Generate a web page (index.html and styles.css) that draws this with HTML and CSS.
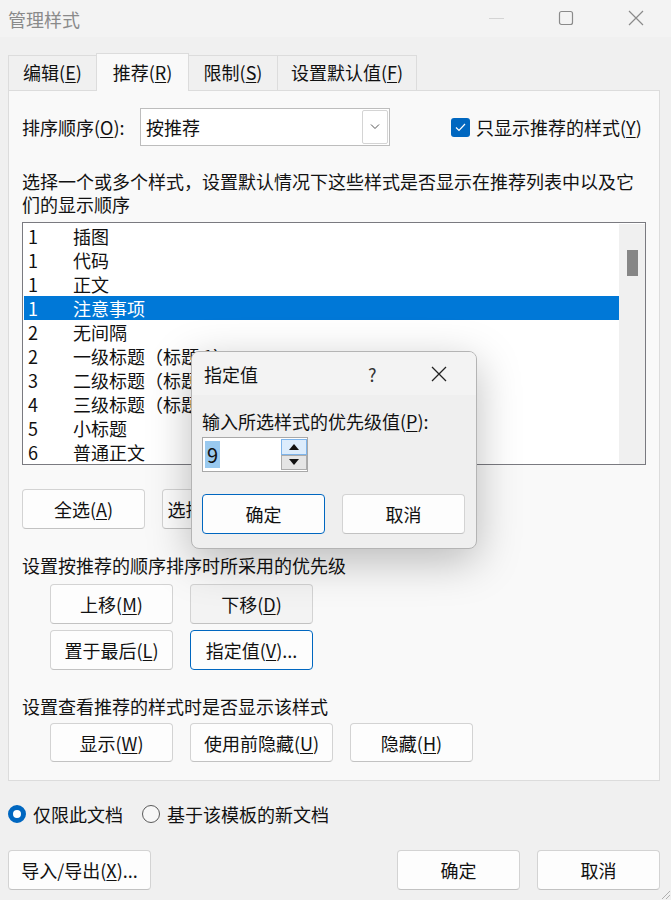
FILE: index.html
```html
<!DOCTYPE html>
<html lang="zh-CN">
<head>
    <meta charset="UTF-8">
    <title>管理样式</title>
    <link rel="stylesheet" href="styles.css">
</head>
<body>
    <div class="window">
        <!-- 标题栏 -->
        <header class="titlebar">
            <span class="title">管理样式</span>
            <div class="controls">
                <span class="ctrl"><svg width="16" height="16" viewBox="0 0 16 16"><path d="M1 8.5h15" stroke="#d4d4d4" stroke-width="1"/></svg></span>
                <span class="ctrl"><svg width="16" height="16" viewBox="0 0 16 16"><rect x="1.5" y="1.5" width="13" height="13" rx="2" fill="none" stroke="#8a8a8a" stroke-width="1.2"/></svg></span>
                <span class="ctrl"><svg width="16" height="16" viewBox="0 0 16 16"><path d="M1 1l14 14M15 1L1 15" stroke="#8a8a8a" stroke-width="1.2"/></svg></span>
            </div>
        </header>

        <main class="content">
            <div class="tabs">
                <div class="tab tab-edit">编辑(<u>E</u>)</div>
                <div class="tab tab-active">推荐(<u>R</u>)</div>
                <div class="tab tab-limit">限制(<u>S</u>)</div>
                <div class="tab tab-default">设置默认值(<u>F</u>)</div>
            </div>

            <section class="panel">
                <div class="sort-row">
                    <span class="sort-label">排序顺序(<u>O</u>):</span>
                    <div class="select">
                        <span class="select-text">按推荐</span>
                        <span class="select-btn"><svg width="10" height="6" viewBox="0 0 10 6"><path d="M1 0.5l4 4 4-4" fill="none" stroke="#555" stroke-width="1"/></svg></span>
                    </div>
                    <label class="check">
                        <span class="checkbox"><svg width="11" height="9" viewBox="0 0 11 9"><path d="M1 4.5l3 3 6-6.5" fill="none" stroke="#fff" stroke-width="1.2"/></svg></span>
                        只显示推荐的样式(<u>Y</u>)
                    </label>
                </div>

                <p class="desc">选择一个或多个样式，设置默认情况下这些样式是否显示在推荐列表中以及它们的显示顺序</p>

                <div class="listbox">
                    <ul class="style-list">
                        <li><span class="num">1</span>插图</li>
                        <li><span class="num">1</span>代码</li>
                        <li><span class="num">1</span>正文</li>
                        <li class="selected"><span class="num">1</span>注意事项</li>
                        <li><span class="num">2</span>无间隔</li>
                        <li><span class="num">2</span>一级标题（标题 1）</li>
                        <li><span class="num">3</span>二级标题（标题 2）</li>
                        <li><span class="num">4</span>三级标题（标题 3）</li>
                        <li><span class="num">5</span>小标题</li>
                        <li><span class="num">6</span>普通正文</li>
                    </ul>
                    <div class="scrollbar"><div class="thumb"></div></div>
                </div>

                <div class="btn-row">
                    <button class="btn">全选(<u>A</u>)</button>
                    <button class="btn btn-wide">选择内置样式(<u>B</u>)</button>
                </div>

                <p class="section-label">设置按推荐的顺序排序时所采用的优先级</p>
                <div class="btn-grid">
                    <button class="btn">上移(<u>M</u>)</button>
                    <button class="btn btn-dim">下移(<u>D</u>)</button>
                    <button class="btn">置于最后(<u>L</u>)</button>
                    <button class="btn btn-focus">指定值(<u>V</u>)...</button>
                </div>

                <p class="section-label">设置查看推荐的样式时是否显示该样式</p>
                <div class="btn-row btn-row-indent">
                    <button class="btn">显示(<u>W</u>)</button>
                    <button class="btn btn-wide">使用前隐藏(<u>U</u>)</button>
                    <button class="btn">隐藏(<u>H</u>)</button>
                </div>
            </section>

            <div class="radios">
                <label class="radio-item"><span class="radio radio-on"></span>仅限此文档</label>
                <label class="radio-item"><span class="radio"></span>基于该模板的新文档</label>
            </div>

            <div class="footer">
                <button class="btn btn-wide">导入/导出(<u>X</u>)...</button>
                <button class="btn btn-ok">确定</button>
                <button class="btn">取消</button>
            </div>
        </main>

        <svg class="grip" width="12" height="12" viewBox="0 0 12 12"><path d="M11 3L3 11M11 7L7 11" stroke="#b0b0b0" stroke-width="1"/></svg>

        <!-- 指定值 对话框 -->
        <div class="dialog">
            <div class="dialog-title">
                <span>指定值</span>
                <span class="dialog-help">?</span>
                <span class="dialog-close"><svg width="16" height="16" viewBox="0 0 16 16"><path d="M1 1l14 14M15 1L1 15" stroke="#222" stroke-width="1.3"/></svg></span>
            </div>
            <div class="dialog-body">
                <p class="dialog-label">输入所选样式的优先级值(<u>P</u>):</p>
                <div class="spin">
                    <span class="spin-value">9</span>
                    <div class="spin-btns">
                        <span class="spin-up"><svg width="10" height="6" viewBox="0 0 10 6"><path d="M5 0L10 6H0z" fill="#111"/></svg></span>
                        <span class="spin-down"><svg width="10" height="6" viewBox="0 0 10 6"><path d="M0 0h10L5 6z" fill="#111"/></svg></span>
                    </div>
                </div>
                <div class="dialog-buttons">
                    <button class="btn btn-focus">确定</button>
                    <button class="btn">取消</button>
                </div>
            </div>
        </div>
    </div>
</body>
</html>
```

FILE: styles.css
```css
/* 窗口 */
body {
    margin: 0;
    font-family: "Noto Sans CJK SC", sans-serif;
    font-size: 18px;
    color: #111;
    background: #f0f0f0;
}

.window {
    position: relative;
    width: 671px;
    height: 900px;
    overflow: hidden;
    background: #f0f0f0;
}

u {
    text-decoration-thickness: 1px;
    text-underline-offset: 2px;
}

p {
    margin: 0;
}

/* 标题栏 */
.titlebar {
    display: flex;
    align-items: center;
    height: 37px;
    background: #f3f3f3;
}

.title {
    padding-left: 8px;
    color: #8a8a8a;
    line-height: 24px;
}

.controls {
    display: flex;
    margin-left: auto;
    height: 37px;
}

.ctrl {
    display: flex;
    align-items: center;
    justify-content: center;
    width: 70px;
    padding-bottom: 1px;
}

.content {
    padding: 16px 11px 0 8px;
}

/* 选项卡 */
.tabs {
    display: flex;
    align-items: flex-end;
    height: 37px;
}

.tab {
    box-sizing: border-box;
    height: 35px;
    line-height: 33px;
    text-align: center;
    border: 1px solid #dcdcdc;
    border-bottom: none;
    margin-right: -1px;
    background: #f0f0f0;
}

.tab-edit { width: 89px; }
.tab-limit { width: 90px; }
.tab-default { width: 140px; }

.tab-active {
    position: relative;
    z-index: 1;
    width: 93px;
    height: 38px;
    line-height: 36px;
    margin-bottom: -1px;
    background: #f9f9f9;
}

/* 面板 */
.panel {
    box-sizing: border-box;
    height: 691px;
    border: 1px solid #dcdcdc;
    background: #f9f9f9;
    padding: 17px 13px 0 13px;
}

.sort-row {
    display: flex;
    align-items: center;
    height: 38px;
}

.sort-label {
    width: 118px;
}

.select {
    box-sizing: border-box;
    display: flex;
    align-items: center;
    width: 250px;
    height: 38px;
    border: 1px solid #bdbdbd;
    background: #fff;
    padding: 1px;
}

.select-text {
    flex: 1;
    padding-left: 4px;
}

.select-btn {
    box-sizing: border-box;
    display: flex;
    align-items: center;
    justify-content: center;
    width: 26px;
    height: 34px;
    border: 1px solid #d4d4d4;
    border-radius: 2px;
}

.check {
    display: flex;
    align-items: center;
    margin-left: 61px;
}

.checkbox {
    display: flex;
    align-items: center;
    justify-content: center;
    width: 19px;
    height: 19px;
    margin-right: 6px;
    border-radius: 3px;
    background: #0067c0;
}

.desc {
    margin-top: 24px;
    line-height: 23px;
}

/* 列表 */
.listbox {
    box-sizing: border-box;
    display: flex;
    height: 243px;
    margin-top: 6px;
    border: 1px solid #7a7a80;
    background: #fff;
}

.style-list {
    flex: 1;
    list-style: none;
    margin: 0;
    padding: 1px 0 0 1px;
    overflow: hidden;
}

.style-list li {
    display: flex;
    height: 24px;
    line-height: 24px;
    padding-left: 4px;
    white-space: nowrap;
}

.style-list .num {
    width: 45px;
}

.style-list .selected {
    background: #0078d7;
    color: #fff;
}

.scrollbar {
    width: 26px;
    margin-top: 1px;
    background: #f0f0f0;
}

.thumb {
    width: 11px;
    height: 26px;
    margin: 26px 0 0 8px;
    background: #868686;
}

/* 按钮 */
.btn {
    box-sizing: border-box;
    width: 123px;
    height: 40px;
    padding: 0;
    font-family: inherit;
    font-size: 18px;
    color: #111;
    background: #fdfdfd;
    border: 1px solid #d3d3d3;
    border-bottom-color: #c2c2c2;
    border-radius: 4px;
    white-space: nowrap;
}

.btn-wide {
    width: 143px;
}

.btn-dim {
    background: #f3f3f3;
}

.btn-focus {
    border-color: #0067c0;
}

.btn-row {
    display: flex;
    gap: 17px;
    margin-top: 24px;
}

.section-label {
    margin-top: 24px;
    line-height: 24px;
}

.btn-grid {
    display: grid;
    grid-template-columns: 123px 123px;
    gap: 6px 17px;
    margin-top: 7px;
    padding-left: 28px;
}

.btn-row-indent {
    margin-top: 5px;
    padding-left: 28px;
}

.btn-row-indent .btn {
    height: 39px;
}

/* 单选按钮 */
.radios {
    display: flex;
    align-items: center;
    gap: 19px;
    margin-top: 24px;
    height: 18px;
}

.radio-item {
    display: flex;
    align-items: center;
    gap: 7px;
    line-height: 24px;
}

.radio {
    box-sizing: border-box;
    width: 18px;
    height: 18px;
    border-radius: 50%;
    border: 1px solid #5a5a5a;
    background: #f7f7f7;
}

.radio-on {
    border: 5px solid #0067c0;
    background: #fff;
}

.footer {
    display: flex;
    gap: 17px;
    margin-top: 27px;
}

.btn-ok {
    margin-left: auto;
}

.grip {
    position: absolute;
    right: 0;
    bottom: 0;
}

/* 对话框 */
.dialog {
    position: absolute;
    left: 191px;
    top: 351px;
    box-sizing: border-box;
    width: 286px;
    height: 198px;
    border: 1px solid #b4b4b4;
    border-radius: 8px;
    background: #efefef;
    box-shadow: 0 12px 44px rgba(0, 0, 0, 0.26);
    overflow: hidden;
}

.dialog-title {
    display: flex;
    align-items: center;
    height: 43px;
    padding-left: 12px;
    background: #f3f3f3;
    line-height: 24px;
}

.dialog-help {
    margin-left: 110px;
    color: #333;
}

.dialog-close {
    display: flex;
    margin-left: 54px;
}

.dialog-body {
    padding: 14px 10px 0 10px;
}

.dialog-label {
    line-height: 24px;
}

.spin {
    box-sizing: border-box;
    display: flex;
    width: 106px;
    height: 35px;
    margin-top: 4px;
    border: 1px solid #a8a8a8;
    background: #fff;
}

.spin-value {
    align-self: center;
    margin-left: 2px;
    padding: 0 2px;
    font-size: 20px;
    line-height: 27px;
    background: #99c9ef;
}

.spin-btns {
    display: flex;
    flex-direction: column;
    margin: 1px 0 1px auto;
}

.spin-btns span {
    box-sizing: border-box;
    display: flex;
    align-items: center;
    justify-content: center;
    width: 26px;
    height: 16px;
}

.spin-up {
    background: #dcecfc;
    border: 1px solid #7eb4ea;
}

.spin-down {
    background: #e5e5e5;
    border: 1px solid #acacac;
}

.dialog-buttons {
    display: flex;
    gap: 17px;
    margin-top: 22px;
}
```
